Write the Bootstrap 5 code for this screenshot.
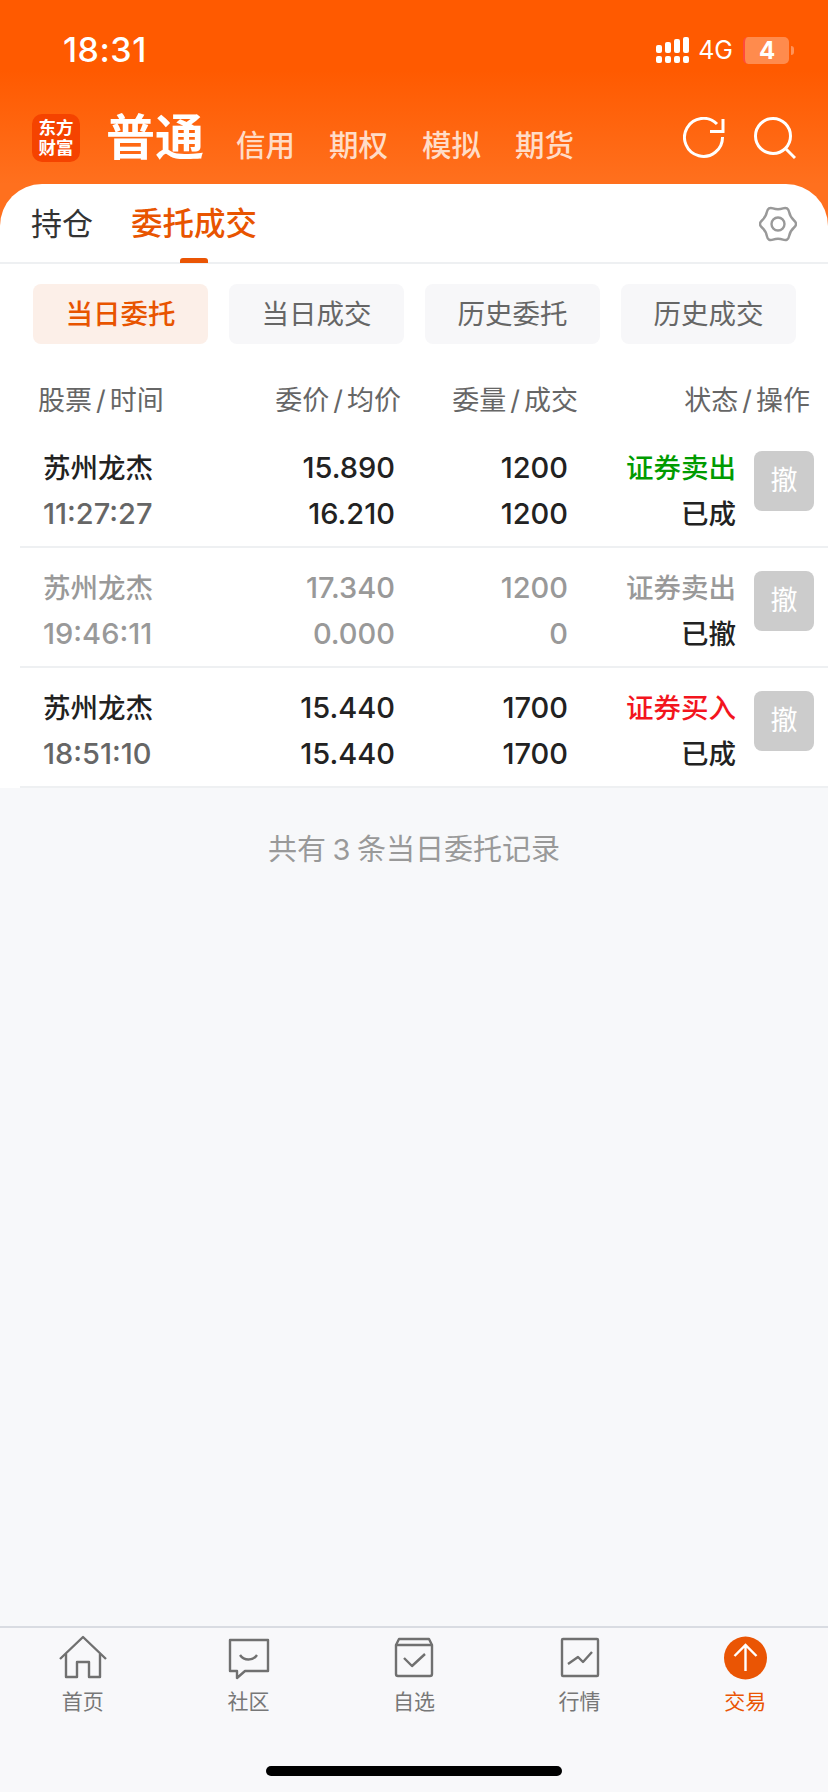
<!DOCTYPE html>
<html lang="zh">
<head>
<meta charset="utf-8">
<title>委托成交</title>
<link href="https://cdn.jsdelivr.net/npm/bootstrap@5.3.0/dist/css/bootstrap.min.css" rel="stylesheet">
<style>
html,body{margin:0;background:#f7f8fa}
body{font-family:Inter,"Noto Sans CJK SC",sans-serif;width:828px;height:1792px;overflow:hidden;color:#222}
.app-shell{height:1792px}
.hero{background:linear-gradient(#ff5a00 0,#ff5a00 70px,#ff701e 184px);height:184px;flex:none}
.status-line{height:100px;padding:0 34px 0 63px;color:#fff}
.clock{font-size:34px;font-weight:500;line-height:1;letter-spacing:.5px}
.net{font-size:25px;line-height:1;margin:0 10px 0 8px}
.batt{width:46px;height:27px;border-radius:5px;background:rgba(255,255,255,.3);border-left:2px solid #ff4a3c;font-size:24px;font-weight:700;line-height:27px;text-align:center}
.nub{width:3px;height:9px;background:rgba(255,255,255,.35);border-radius:0 3px 3px 0;margin-left:2px}
.acct-line{height:84px;padding:14px 32px 0 32px}
.logo-tile{width:48px;height:48px;border-radius:10px;background:#f54300;color:#fff;font-size:17.500px;font-weight:700;line-height:20px;text-align:center;flex:none;padding-top:4px;margin-right:26px}
.acct-main{font-size:49px;font-weight:700;color:#fff;line-height:48px;margin-right:32px}
.acct-sub{font-size:29.500px;font-weight:500;color:#ffdcc7;line-height:36px;margin-right:34px;padding-top:13px}
.panel{background:#fff}
.panel-top{background:#fff;border-radius:42px 42px 0 0;height:80px;border-bottom:2px solid #eef0f2;padding:1px 31px 0;position:relative}
.hero-tail{background:#ff701e}
.tab-plain{font-size:31px;line-height:34px;color:#333;margin-right:38px}
.tab-on{font-size:31.500px;line-height:34px;color:#e85400;font-weight:500}
.tab-mark{position:absolute;left:180px;bottom:-1px;width:28px;height:5px;background:#ea5504;border-radius:3px 3px 0 0}
.segs{padding:20px 33px 0;gap:21px}
.seg-item{width:175px;height:60px;border-radius:8px;background:#f7f7f9;color:#666;font-size:27.500px;line-height:60px;text-align:center;flex:none}
.seg-on{background:#fcefe8;color:#e85400;font-weight:500}
.col-heads{height:84px;align-items:center;font-size:27px;color:#666;padding-left:38px;padding-top:30px;display:grid;grid-template-columns:200px 163px 177px 232px}
.col-heads>div:not(:first-child){text-align:right}
.sl{margin:0 4px}
.order-row{margin-left:20px;height:120px;border-bottom:2px solid #eef0f2;display:grid;grid-template-columns:180px 172px 173px 168px 60px;padding-left:23px;align-items:start}
.cell{font-size:29px;line-height:46px;font-weight:500;text-align:right;padding-top:17px}
.cell-l{text-align:left}
.cell span{display:block}
.zh{font-size:27.500px}
.tm{color:#666}
.dim{color:#999}
.up{color:#f3151e}
.dn{color:#009b00}
.cancel{grid-column:5;width:60px;height:60px;margin-left:18px;margin-top:23px;border-radius:8px;background:#ccc;color:#fff;font-size:27px;line-height:60px;text-align:center}
.tail-note{font-size:29px;color:#999;text-align:center;line-height:36px;padding-top:44px;word-spacing:-1.500px}
.filler{flex:1 1 auto}
.foot{background:#f8f8fa;border-top:2px solid #d9dce2;height:166px;flex:none;position:relative;padding-top:7px}
.foot-item{width:165.600px;flex:none;text-align:center;font-size:21px;line-height:26px;color:#777}
.foot-item svg{display:block;margin:0 auto 8px;width:48px;height:46px}
.foot-on{color:#ea5504}
.home-bar{position:absolute;left:266px;top:138px;width:296px;height:10px;background:#000;border-radius:5px}
.tool-icons{gap:29px;padding-top:3px}
</style>
</head>
<body>
<div class="app-shell d-flex flex-column">
  <div class="hero">
    <div class="status-line d-flex align-items-center">
      <div class="clock">18:31</div>
      <div class="ms-auto d-flex align-items-center">
        <svg width="34" height="27" viewBox="0 0 34 27" fill="#fff"><rect x="0" y="8" width="6" height="8" rx="2"/><rect x="9" y="5" width="6" height="11" rx="2"/><rect x="18" y="2" width="6" height="14" rx="2"/><rect x="27" y="0" width="6" height="16" rx="2"/><rect x="0" y="19" width="6" height="7" rx="2"/><rect x="9" y="19" width="6" height="7" rx="2"/><rect x="18" y="19" width="6" height="7" rx="2"/><rect x="27" y="19" width="6" height="7" rx="2"/></svg>
        <div class="net">4G</div>
        <div class="batt">4</div>
        <div class="nub"></div>
      </div>
    </div>
    <div class="acct-line d-flex align-items-start">
      <div class="logo-tile">东方<br>财富</div>
      <div class="acct-main">普通</div>
      <div class="acct-sub">信用</div>
      <div class="acct-sub">期权</div>
      <div class="acct-sub">模拟</div>
      <div class="acct-sub">期货</div>
      <div class="tool-icons ms-auto d-flex">
        <svg width="42" height="42" viewBox="0 0 42 42" fill="none" stroke="#fff" stroke-width="3"><path d="M34 7A19 19 0 1 0 39.500 20"/><path d="M27 14.500H40V2"/></svg>
        <svg width="42" height="44" viewBox="0 0 42 44" fill="none" stroke="#fff" stroke-width="3"><circle cx="19" cy="19" r="17.500"/><path d="M32 32L41 41"/></svg>
      </div>
    </div>
  </div>
  <div class="hero-tail">
    <div class="panel-top d-flex align-items-center">
      <div class="tab-plain">持仓</div>
      <div class="tab-on">委托成交</div>
      <div class="tab-mark"></div>
      <svg class="ms-auto" width="38" height="38" viewBox="0 0 38 38" fill="none" stroke="#999" stroke-width="2.400"><path d="M35.050 22.500Q39 19 35.050 15.500Q31.100 12 30.050 6.850Q29 1.700 24 3.350Q19 5 14 3.350Q9 1.700 7.950 6.850Q6.900 12 2.950 15.500Q-1 19 2.950 22.500Q6.900 26 7.950 31.150Q9 36.300 14 34.650Q19 33 24 34.650Q29 36.300 30.050 31.150Q31.100 26 35.050 22.500Z"/><circle cx="19" cy="19" r="6.500"/></svg>
    </div>
  </div>
  <div class="panel">
    <div class="segs d-flex">
      <div class="seg-item seg-on">当日委托</div>
      <div class="seg-item">当日成交</div>
      <div class="seg-item">历史委托</div>
      <div class="seg-item">历史成交</div>
    </div>
    <div class="col-heads">
      <div>股票<span class="sl">/</span>时间</div><div>委价<span class="sl">/</span>均价</div><div>委量<span class="sl">/</span>成交</div><div>状态<span class="sl">/</span>操作</div>
    </div>
    <div class="order-row">
      <div class="cell cell-l"><span class="zh">苏州龙杰</span><span class="tm">11:27:27</span></div>
      <div class="cell"><span>15.890</span><span>16.210</span></div>
      <div class="cell"><span>1200</span><span>1200</span></div>
      <div class="cell"><span class="zh dn">证券卖出</span><span class="zh">已成</span></div>
      <div class="cancel">撤</div>
    </div>
    <div class="order-row">
      <div class="cell cell-l dim"><span class="zh">苏州龙杰</span><span>19:46:11</span></div>
      <div class="cell dim"><span>17.340</span><span>0.000</span></div>
      <div class="cell dim"><span>1200</span><span>0</span></div>
      <div class="cell"><span class="zh dim">证券卖出</span><span class="zh">已撤</span></div>
      <div class="cancel">撤</div>
    </div>
    <div class="order-row">
      <div class="cell cell-l"><span class="zh">苏州龙杰</span><span class="tm">18:51:10</span></div>
      <div class="cell"><span>15.440</span><span>15.440</span></div>
      <div class="cell"><span>1700</span><span>1700</span></div>
      <div class="cell"><span class="zh up">证券买入</span><span class="zh">已成</span></div>
      <div class="cancel">撤</div>
    </div>
  </div>
  <div class="tail-note">共有 3 条当日委托记录</div>
  <div class="filler"></div>
  <div class="foot d-flex align-items-start">
    <div class="foot-item">
      <svg viewBox="0 0 48 46" fill="none" stroke="#707070" stroke-width="2.400" stroke-linejoin="round"><path d="M1 24L24 2L47 24"/><path d="M7 19V42H18V27H30V42H41V19"/></svg>
      首页
    </div>
    <div class="foot-item">
      <svg viewBox="0 0 48 46" fill="none" stroke="#707070" stroke-width="2.400" stroke-linejoin="round"><path d="M6 5H44V36H21L13 43V36H6Z"/><path d="M16 20C20 26 29 26 33 20"/></svg>
      社区
    </div>
    <div class="foot-item">
      <svg viewBox="0 0 48 46" fill="none" stroke="#707070" stroke-width="2.400" stroke-linejoin="round"><path d="M6 10L9 4H39L42 10V39Q42 41 40 41H8Q6 41 6 39Z"/><path d="M6 10H42"/><path d="M14 23L22 31L35 19"/></svg>
      自选
    </div>
    <div class="foot-item">
      <svg viewBox="0 0 48 46" fill="none" stroke="#707070" stroke-width="2.400" stroke-linejoin="round"><rect x="6" y="4" width="36" height="37" rx="1"/><path d="M12 29L22 22L27 27L36 17"/></svg>
      行情
    </div>
    <div class="foot-item foot-on">
      <svg viewBox="0 0 48 46"><circle cx="24.500" cy="23" r="21.500" fill="#ea5504"/><path d="M24.500 36V10M13.500 21L24.500 10L35.500 21" fill="none" stroke="#fff" stroke-width="2.400"/></svg>
      交易
    </div>
    <div class="home-bar"></div>
  </div>
</div>
</body>
</html>
